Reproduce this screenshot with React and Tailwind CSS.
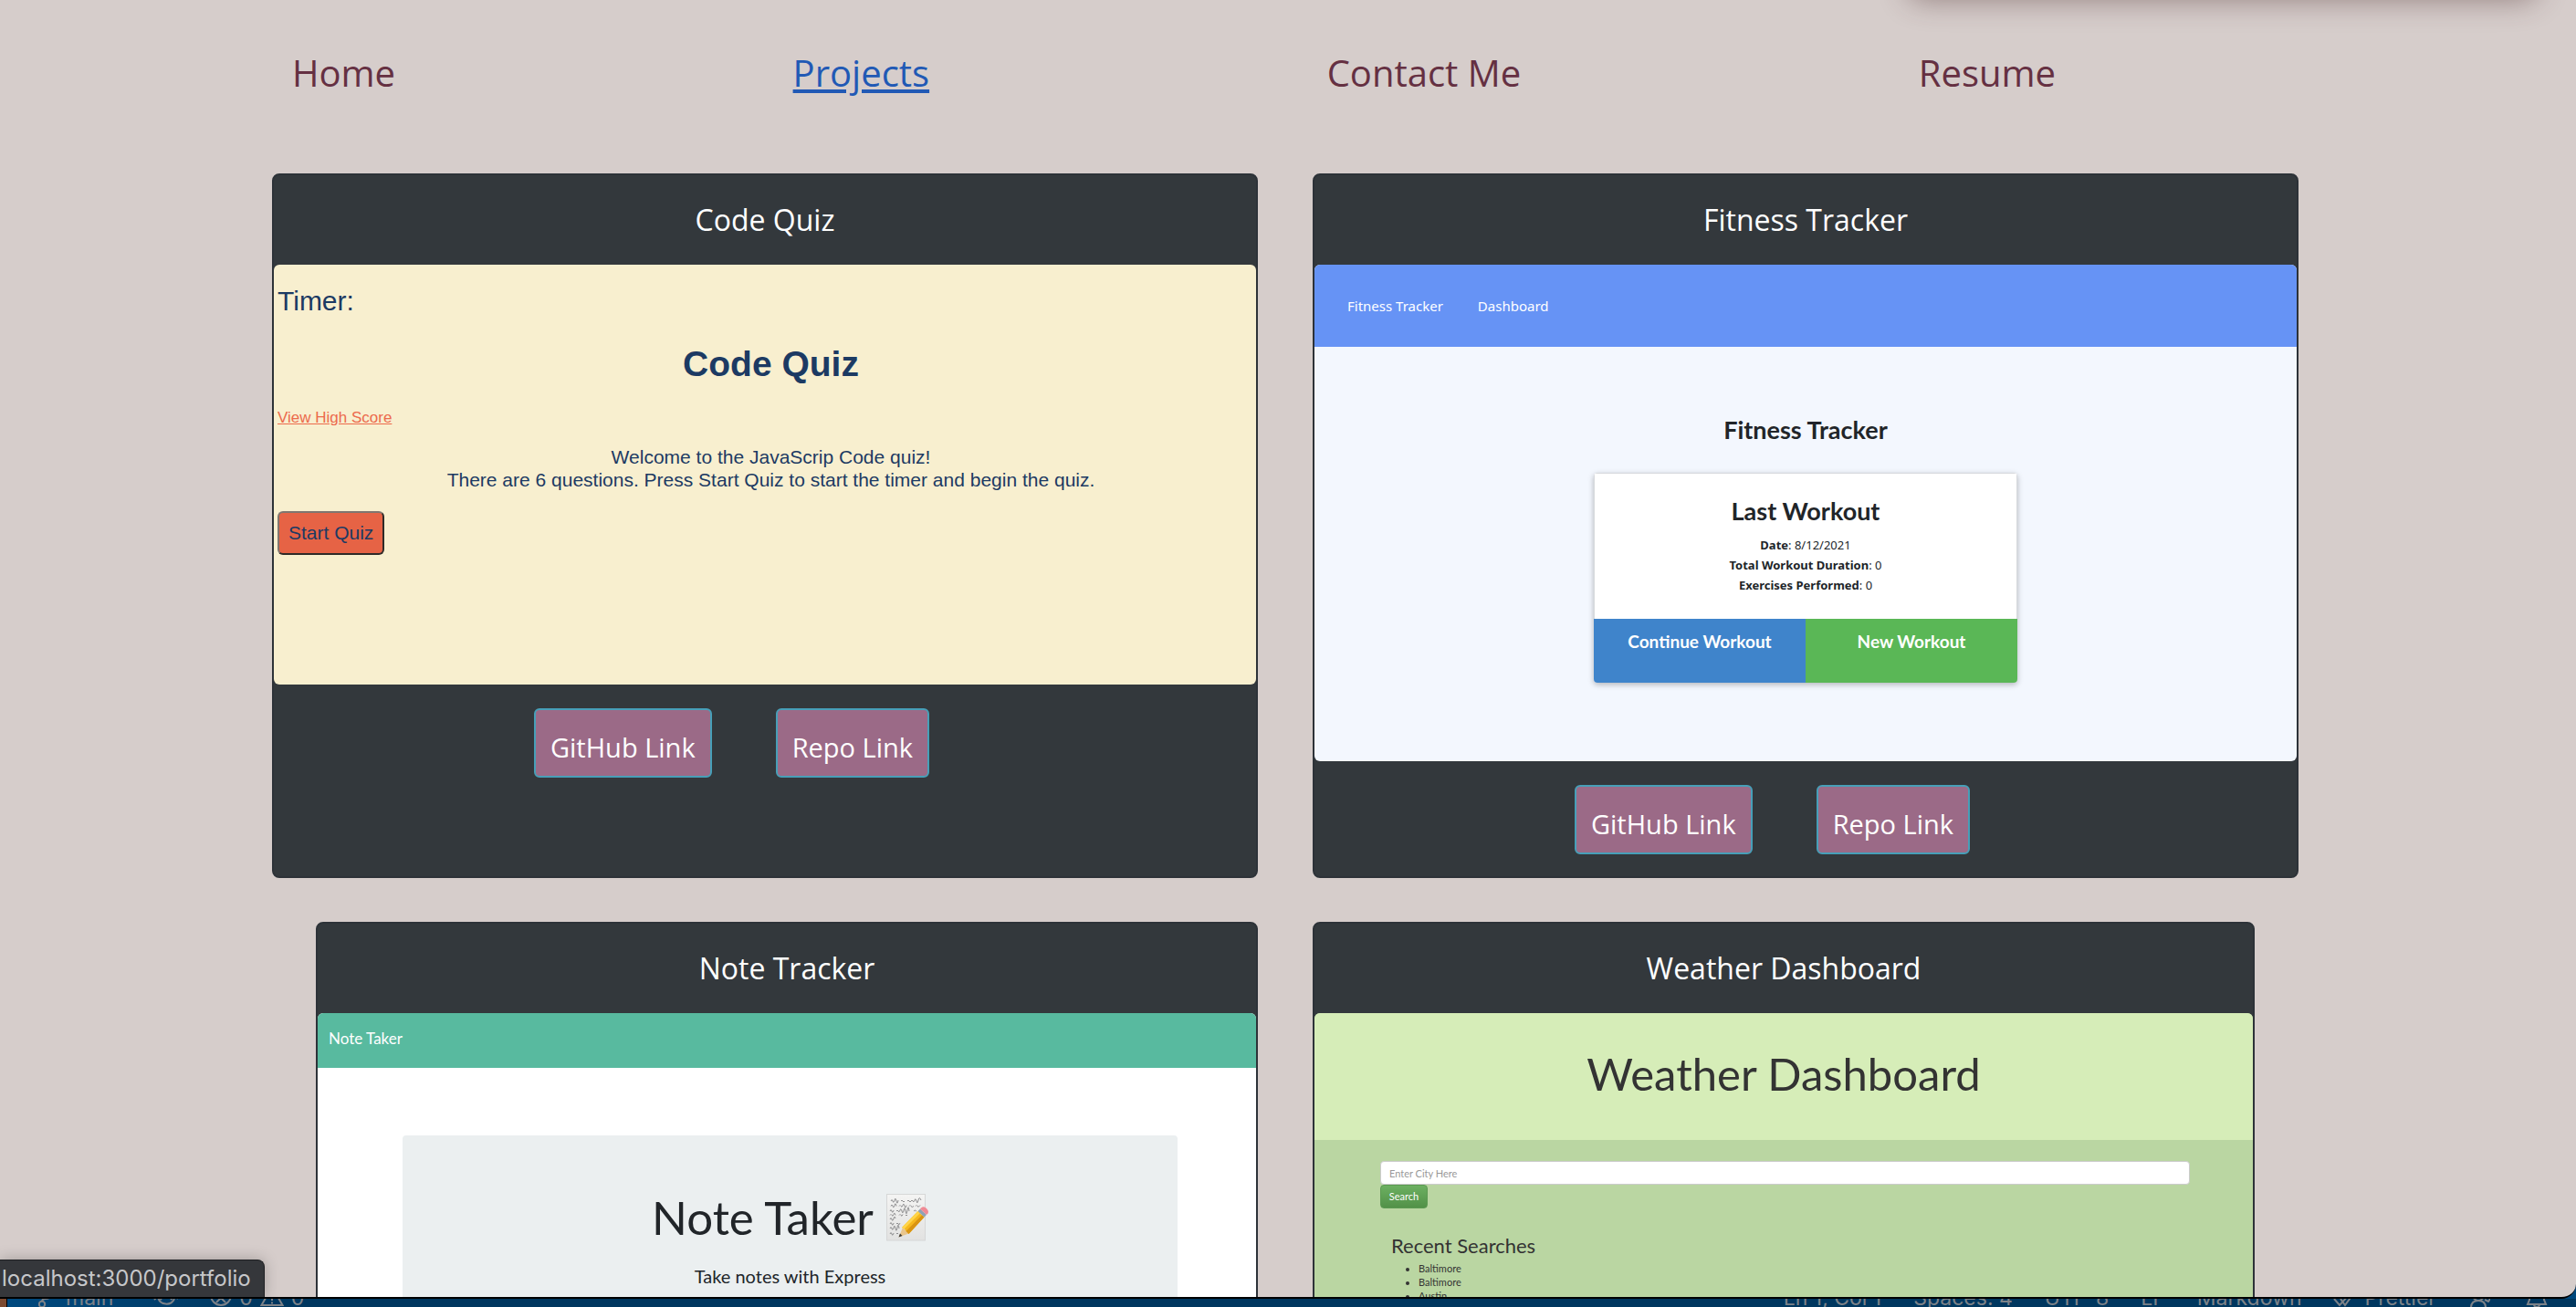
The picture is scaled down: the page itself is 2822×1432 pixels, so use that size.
const NAV = [
  { label: "Home", href: "#home" },
  { label: "Projects", href: "#projects", active: true },
  { label: "Contact Me", href: "#contact" },
  { label: "Resume", href: "#resume" },
];

function Nav() {
  return (
    <nav className="pt-14">
      <ul className="flex justify-between pl-[320px] pr-[570px] text-[40px] leading-[48px]">
        {NAV.map((item) => (
          <li key={item.label}>
            <a
              href={item.href}
              className={
                item.active
                  ? "text-[#2159b5] underline decoration-4 underline-offset-[3px]"
                  : "text-[#653042]"
              }
            >
              {item.label}
            </a>
          </li>
        ))}
      </ul>
    </nav>
  );
}

function ProjectLink({ children }) {
  return (
    <a
      href="#link"
      className="flex h-[76px] items-center rounded-md border-2 border-[#479fb8] bg-[#9b6a87] px-4 pt-[9px] text-[29px] leading-9 text-white"
    >
      {children}
    </a>
  );
}

function ProjectCard({ title, children }) {
  return (
    <article className="flex min-w-0 flex-1 flex-col rounded-lg border-2 border-[#2d3238] bg-[#33383c]">
      <h2 className="flex h-[98px] items-center justify-center text-[32px] leading-10 text-white">{title}</h2>
      <div className="overflow-hidden rounded-md">{children}</div>
      <div className="flex justify-center gap-[70px] pt-[26px] pr-[73px] pb-6">
        <ProjectLink>GitHub Link</ProjectLink>
        <ProjectLink>Repo Link</ProjectLink>
      </div>
    </article>
  );
}

function CodeQuizPreview() {
  return (
    <div className="min-h-[460px] bg-[#f8efcf] pt-[22px] pl-1 font-['Liberation_Sans',sans-serif] text-[#1c3a63]">
      <p className="text-[30px] leading-9">Timer:</p>
      <h3 className="mt-7 pl-[9px] text-center text-[39px] leading-[45px] font-bold">Code Quiz</h3>
      <a href="#scores" className="mt-[27px] block w-fit text-[17px] leading-5 text-[#ec6a4c] underline">
        View High Score
      </a>
      <p className="mt-5 pl-[9px] text-center text-[21px] leading-[25px]">
        Welcome to the JavaScrip Code quiz!
        <br />
        There are 6 questions. Press Start Quiz to start the timer and begin the quiz.
      </p>
      <button
        type="button"
        className="mt-[22px] h-12 rounded-md border-2 border-t-[#80766f] border-r-[#2f2a28] border-b-[#2f2a28] border-l-[#80766f] bg-[#e66345] px-[10px] text-[21px] leading-6"
      >
        Start Quiz
      </button>
    </div>
  );
}

const WORKOUT = [
  ["Date", "8/12/2021"],
  ["Total Workout Duration", "0"],
  ["Exercises Performed", "0"],
];

function FitnessPreview() {
  return (
    <div className="min-h-[544px] bg-[#f3f7fe] text-[#212529]">
      <div className="flex h-[90px] items-center gap-[38px] bg-[#6693f5] pl-9 font-['Noto_Sans',sans-serif] text-[15px] leading-5 text-white">
        <a href="#tracker">Fitness Tracker</a>
        <a href="#dashboard">Dashboard</a>
      </div>
      <h3 className="mt-[74px] text-center font-['Lato',sans-serif] text-[27px] leading-[34px] font-bold">
        Fitness Tracker
      </h3>
      <div className="mx-auto mt-[30px] w-[464px] max-w-full overflow-hidden rounded shadow-[0_2px_6px_rgba(0,0,0,0.28)]">
        <div className="border border-b-0 border-[#d8dade] bg-white pt-6 pb-[26px] text-center">
          <h4 className="font-['Lato',sans-serif] text-[27px] leading-[34px] font-bold">Last Workout</h4>
          <div className="mt-[9px] font-['Noto_Sans',sans-serif] text-[13px] leading-[22px]">
            {WORKOUT.map(([name, value]) => (
              <p key={name}>
                <strong className="font-bold">{name}</strong>: {value}
              </p>
            ))}
          </div>
        </div>
        <div className="grid grid-cols-2 font-['Lato',sans-serif] text-[19px] leading-6 font-bold text-white">
          <button type="button" className="flex h-[70px] justify-center bg-[#3f84cb] pt-[13px]">
            Continue Workout
          </button>
          <button type="button" className="flex h-[70px] justify-center bg-[#5ab756] pt-[13px]">
            New Workout
          </button>
        </div>
      </div>
    </div>
  );
}

function MemoIcon() {
  return (
    <svg viewBox="0 0 46 52" className="h-[52px] w-[46px]" aria-hidden="true">
      <defs>
        <linearGradient id="paper" x1="0" y1="0" x2="0" y2="1">
          <stop offset="0" stopColor="#f4f4f3" />
          <stop offset="1" stopColor="#e2e2e1" />
        </linearGradient>
      </defs>
      <rect x="0.5" y="0.5" width="42" height="50.5" fill="url(#paper)" stroke="#d6d7d7" />
      <g fill="none" stroke="#77777a" strokeWidth="0.8">
        <path d="M5 8q1-3 2 0t2-1 2 1 2-1M16 8q1-2 2 0t2 0M23 8q1-2 2 0t2 0 2 0 2-1 2 1 2-1 3 0" />
        <path d="M5 13.500q1-3 2 0t2-1 2 1M14 13.500q1-2 2 0t2-1 2 1 2-1M25 13.500q1-2 2 0t3 0M32 13.500q1-2 2 0t3-1" />
        <path d="M4 19q1-3 2 0t2-1M11 19q1-2 2 0t2-1 2 1 2-1 2 1 2-1 2 1M30 19q1-2 3 0" />
        <path d="M4 23.500q1-2 2 0t2-1 2 1M14 23.500q1-2 2 0t2-1M21 23.500h2" />
        <path d="M4 28q1-3 2 0t2-1 2 0" />
        <path d="M4 33q1-3 2 0t2-1M11 33q1-2 2 0t2-1" />
        <path d="M4 38q1-3 2 0t2-1 2 1 2-1 2 1" />
        <path d="M4 44q1-3 2 0t2-1M11 44q1-2 2 0" />
      </g>
      <path d="M13.500 47.500 18 37l6.500 6.500z" fill="#e9c58c" />
      <path d="M13.500 47.500 15 43.500l2.500 2.500z" fill="#3c3a36" />
      <path d="m17 37 17.500-18 7 6.500L24.500 44q-1-3-3.500-3.500-.5-3-4-3.500z" fill="#f6b81d" />
      <path d="m17 37 17.500-18 2.300 2.200L19.500 38.500z" fill="#ffd54a" />
      <path d="m21.500 41 17.600-17.800 2.400 2.300L24.500 44z" fill="#d99412" />
      <path d="m34.500 19 2.500-2.500 7 6.500-2.500 2.500z" fill="#8fa3b5" />
      <path d="m37 16.500 1-1q3-2.500 6 .5t1.500 5.500L44 23z" fill="#f08a95" />
    </svg>
  );
}

function NotePreview() {
  return (
    <div className="min-h-[440px] bg-white font-['Lato',sans-serif] text-[#212529]">
      <div className="flex h-[60px] items-center bg-[#58ba9f] pb-1 pl-3 text-[17px] leading-5 text-white">
        <a href="#notes">Note Taker</a>
      </div>
      <div className="mt-[74px] mr-[86px] ml-[93px] h-[320px] rounded bg-[#ebeff0] pt-[60px] text-center">
        <h3 className="flex items-center justify-center gap-[14px] text-[51px] leading-[60px]">
          Note Taker
          <MemoIcon />
        </h3>
        <p className="mt-[22px] text-[20px] leading-6">Take notes with Express</p>
      </div>
    </div>
  );
}

function WeatherPreview() {
  return (
    <div className="min-h-[440px] bg-[#bad6a2] font-['Lato',sans-serif] text-[#333]">
      <h3 className="flex h-[139px] items-center justify-center bg-[#d6edb8] pb-2 text-[49px] leading-[60px]">
        Weather Dashboard
      </h3>
      <div className="pt-[23px] pr-[69px] pl-[72px]">
        <input
          type="text"
          aria-label="City"
          placeholder="Enter City Here"
          className="block h-[26px] w-full rounded-sm border border-[#cccccc] bg-white px-[9px] text-[11px] leading-4 placeholder:text-[#999]"
        />
        <button
          type="button"
          className="block h-[26px] w-[52px] rounded-sm border border-[#5c9a52] bg-linear-to-b from-[#6cb061] to-[#529148] text-[11px] leading-4 text-white"
        >
          Search
        </button>
        <h4 className="mt-7 ml-3 text-[22px] leading-[26px]">Recent Searches</h4>
        <ul className="mt-1 ml-[42px] list-disc text-[11px] leading-[15px]">
          <li>Baltimore</li>
          <li>Baltimore</li>
          <li>Austin</li>
        </ul>
      </div>
    </div>
  );
}

function EditorStatusBar() {
  return (
    <footer className="flex h-[9px] shrink-0 items-end justify-between overflow-hidden bg-linear-to-r from-[#004a80] via-[#00375f] via-10% to-[#00375f] pr-[31px] font-['Inter',sans-serif] text-[23px] leading-5 text-[#7d8288]">
      <div className="flex items-end">
        <span className="mr-[34px] h-5 w-2 border-r border-black bg-[#7c4a30]" />
        <svg viewBox="0 0 18 24" className="h-6 w-[18px]" fill="none" stroke="currentColor" strokeWidth="2" aria-hidden="true">
          <circle cx="4" cy="21" r="3.200" />
          <circle cx="14" cy="5" r="3.200" />
          <path d="M4 18q0-3 4-3 6 0 6-6" />
        </svg>
        <span className="ml-3">main</span>
        <svg viewBox="0 0 28 24" className="ml-11 h-6 w-7" fill="none" stroke="currentColor" strokeWidth="2" aria-hidden="true">
          <path d="M5 13a9.500 9.500 0 0 0 18 2M1 16l4-4 4 4M19 16l4-4 4 3" />
        </svg>
        <svg viewBox="0 0 24 24" className="ml-[34px] size-6" fill="none" stroke="currentColor" strokeWidth="2" aria-hidden="true">
          <circle cx="12" cy="11" r="11" />
          <path d="m7 9 10 10M17 9 7 19" />
        </svg>
        <span className="ml-2">0</span>
        <svg viewBox="0 0 26 24" className="ml-2 h-6 w-[26px]" fill="none" stroke="currentColor" strokeWidth="2" aria-hidden="true">
          <path d="M13 2 1.500 22h23zM13 10v7M13 18.500v2" />
        </svg>
        <span className="ml-2">0</span>
      </div>
      <div className="flex items-end gap-[35px]">
        <span>Ln 1, Col 1</span>
        <span>Spaces: 4</span>
        <span>UTF-8</span>
        <span>LF</span>
        <span>Markdown</span>
        <span className="flex items-end gap-3">
          <svg viewBox="0 0 22 22" className="size-[22px]" fill="none" stroke="currentColor" strokeWidth="2" aria-hidden="true">
            <path d="m1 13 6 7L18 8M8 13l5 7 8-11" />
          </svg>
          Prettier
        </span>
        <svg viewBox="0 0 24 24" className="h-6 w-[24px]" fill="none" stroke="currentColor" strokeWidth="2" aria-hidden="true">
          <circle cx="11" cy="11" r="6" />
          <path d="M3 25q0-8 8-8t8 8M18 16l4 2 2-3" />
        </svg>
        <svg viewBox="0 0 24 24" className="ml-1 size-6" fill="none" stroke="currentColor" strokeWidth="2" aria-hidden="true">
          <path d="M4 10q0-8 8-8t8 8v6l2 5H2l2-5zM9 21q0 3 3 3t3-3" />
        </svg>
      </div>
    </footer>
  );
}

export default function App() {
  return (
    <div className="flex h-screen flex-col overflow-hidden bg-[#00477c] font-['Open_Sans',sans-serif]">
      <div className="relative min-h-0 flex-1 overflow-hidden rounded-br-2xl border-b-2 border-black bg-[#d6cdcb]">
        <div className="absolute -top-10 right-[42px] h-10 w-[690px] rounded-2xl shadow-[0_0_32px_rgba(70,40,40,0.45)]" />
        <Nav />
        <main className="mt-[86px] flex flex-col items-center gap-12 pr-[6px]">
          <div className="flex w-full max-w-[2220px] gap-[60px]">
            <ProjectCard title="Code Quiz">
              <CodeQuizPreview />
            </ProjectCard>
            <ProjectCard title="Fitness Tracker">
              <FitnessPreview />
            </ProjectCard>
          </div>
          <div className="flex w-full max-w-[2220px] gap-[60px] px-12">
            <ProjectCard title="Note Tracker">
              <NotePreview />
            </ProjectCard>
            <ProjectCard title="Weather Dashboard">
              <WeatherPreview />
            </ProjectCard>
          </div>
        </main>
        <div className="absolute bottom-0 left-0 flex h-[41px] items-center rounded-tr-lg border-t border-r border-[#1f2023] bg-[#35373b] pr-[14px] pl-[2px] font-['Inter',sans-serif] text-[24px] leading-8 text-[#c6c7ca] shadow-[0_0_16px_rgba(0,0,0,0.25)]">
          localhost:3000/portfolio
        </div>
      </div>
      <EditorStatusBar />
    </div>
  );
}
